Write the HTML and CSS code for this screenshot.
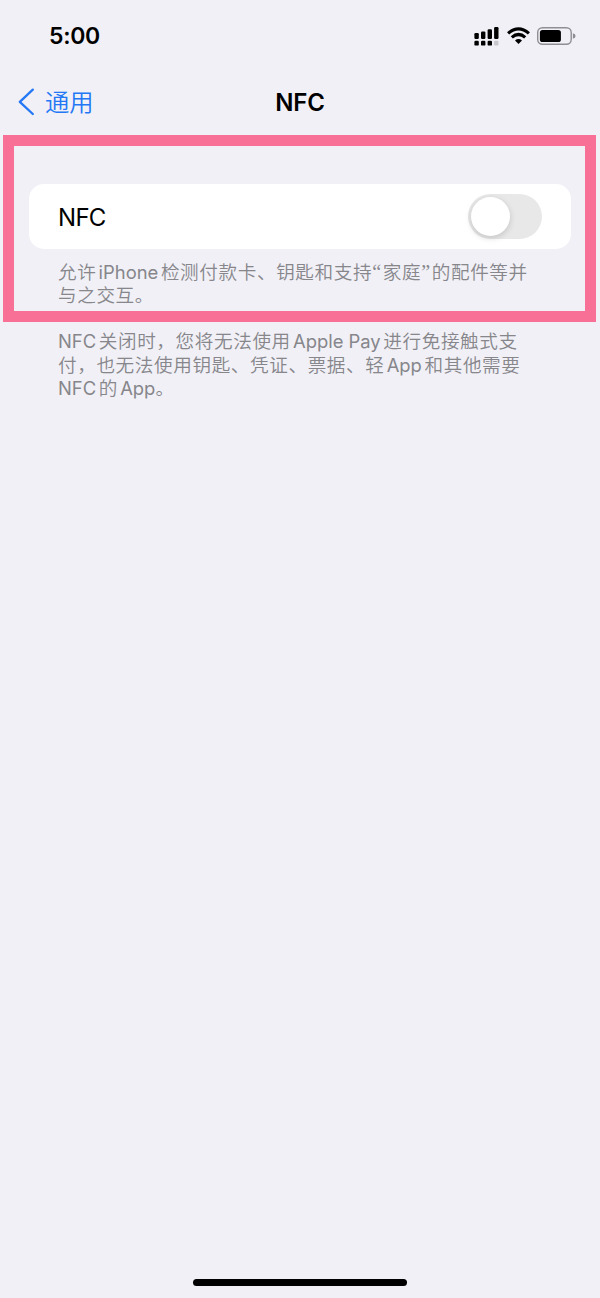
FILE: index.html
```html
<!DOCTYPE html>
<html lang="zh-CN">
<head>
<meta charset="utf-8">
<title>NFC</title>
<link rel="stylesheet" href="styles.css">
</head>
<body>
<div class="screen">
  <header class="status">
    <span class="time">5:00</span>
    <svg class="status-icons" width="104" height="24" viewBox="0 0 104 24">
      <g>
        <rect x="1.4" y="9" width="4.4" height="6" rx="1.2"/>
        <rect x="8" y="7.4" width="4.4" height="7.6" rx="1.2"/>
        <rect x="14.6" y="5.2" width="4.4" height="9.8" rx="1.2"/>
        <rect x="21.1" y="3" width="4.4" height="12" rx="1.2"/>
        <rect x="1.4" y="16.8" width="4.4" height="4.8" rx="1.2"/>
        <rect x="8" y="16.8" width="4.4" height="4.8" rx="1.2"/>
        <rect x="14.6" y="16.8" width="4.4" height="4.8" rx="1.2"/>
        <rect x="21.1" y="16.8" width="4.4" height="4.8" rx="1.2" fill="#c7c7cb"/>
      </g>
      <g fill="none" stroke="#000" stroke-width="3.2">
        <path d="M35.1 9.4Q45.5 0.4 55.9 9.4"/>
        <path d="M38.8 13.4Q45.5 7.6 52.2 13.4"/>
      </g>
      <path d="M42 16.4Q45.5 13.6 49 16.4L45.5 20Z"/>
      <rect x="64.7" y="3.7" width="33.5" height="16.6" rx="4.8" fill="none" stroke="#8e8e93" stroke-width="1.4"/>
      <rect x="66.9" y="5.9" width="21" height="12.2" rx="2.6"/>
      <path d="M99.9 9.2Q102.6 10 102.6 12T99.9 14.8Z" fill="#8e8e93"/>
    </svg>
  </header>
  <nav class="nav">
    <a class="back">
      <svg width="18" height="28" viewBox="0 0 18 28"><path d="M15.8 1.6L2.8 13.8L15.8 26" fill="none" stroke="#2478f5" stroke-width="2.3" stroke-linecap="round" stroke-linejoin="round"/></svg>
      <span class="back-text">通用</span>
    </a>
    <h1 class="title">NFC</h1>
    <span></span>
  </nav>
  <main>
    <section class="highlight">
      <div class="cell">
        <span class="label">NFC</span>
        <span class="switch"><span class="knob"></span></span>
      </div>
      <p class="note">
        <span class="line">允许<span class="latin">iPhone</span>检测付款卡、钥匙和支持<span class="quote">“</span>家庭<span class="quote">”</span>的配件等并</span>
        <span class="line">与之交互。</span>
      </p>
    </section>
    <p class="note detail">
      <span class="line"><span class="latin first">NFC</span>关闭时，您将无法使用<span class="latin">Apple Pay</span>进行免接触式支</span>
      <span class="line">付，也无法使用钥匙、凭证、票据、轻<span class="latin">App</span>和其他需要</span>
      <span class="line"><span class="latin first">NFC</span>的<span class="latin last">App</span>。</span>
    </p>
  </main>
  <div class="home-bar"></div>
</div>
</body>
</html>
```
FILE: styles.css
```css
* { box-sizing: border-box; }
body {
  margin: 0;
  background: #f1f0f6;
  color: #000;
  font-family: Inter, "Noto Sans CJK SC", sans-serif;
}
.screen {
  display: flex;
  flex-direction: column;
  width: 600px;
  height: 1298px;
  overflow: hidden;
}
.status {
  display: flex;
  justify-content: space-between;
  align-items: center;
  height: 72px;
  padding: 0 23px 0 49px;
}
.time {
  font-size: 23px;
  font-weight: 600;
  letter-spacing: -0.3px;
}
.nav {
  display: grid;
  grid-template-columns: 1fr auto 1fr;
  align-items: center;
  height: 60px;
  padding: 0 17px;
}
.back {
  display: flex;
  align-items: center;
  gap: 10px;
  color: #2478f5;
  font-size: 24.3px;
  line-height: 36px;
  font-family: "Noto Sans CJK SC", sans-serif;
  font-weight: 350;
}
.back-text { padding-bottom: 3px; }
.title {
  margin: 0;
  font-size: 24px;
  font-weight: 600;
  letter-spacing: -0.2px;
}
.highlight {
  height: 187px;
  margin: 3px 4px 0 3px;
  padding: 38px 14px 0 15px;
  border: 11px solid #f97096;
}
.cell {
  display: flex;
  justify-content: space-between;
  align-items: center;
  height: 65px;
  padding: 0 29px;
  border-radius: 15px;
  background: #fff;
}
.label {
  padding-top: 2px;
  font-size: 24px;
  letter-spacing: -0.7px;
}
.switch {
  width: 74px;
  height: 45px;
  padding: 3px;
  border-radius: 23px;
  background: #e8e8e8;
}
.knob {
  display: block;
  width: 39px;
  height: 39px;
  border-radius: 50%;
  background: #fff;
  box-shadow: 0 2px 6px rgba(0, 0, 0, 0.16);
}
.note {
  margin: 10px 0 0 29px;
  color: #86868b;
  font-family: "Noto Sans CJK SC", sans-serif;
  font-size: 18.6px;
  font-weight: 350;
  line-height: 23.2px;
  letter-spacing: 0.61px;
}
.detail { margin: 6.4px 0 0 58px; }
.line {
  display: block;
  height: 23.2px;
  white-space: nowrap;
}
.latin {
  margin: 0 2.6px 0 2.2px;
  font-family: Inter, sans-serif;
  font-size: 18.4px;
  font-weight: 400;
  letter-spacing: 0;
}
.first { margin-left: 0; }
.last { margin-right: 0; }
.quote {
  font-family: "Liberation Serif", serif;
  font-size: 20px;
  line-height: 1;
  letter-spacing: 1.7px;
}
.home-bar {
  width: 214px;
  height: 7px;
  margin: auto auto 12px;
  border-radius: 4px;
  background: #000;
}
```
